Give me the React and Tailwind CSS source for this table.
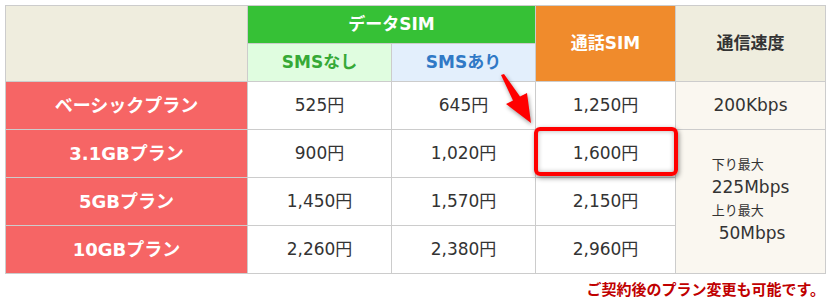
export default function App() {
  const rows = [
    { name: 'ベーシックプラン', a: '525円', b: '645円', c: '1,250円' },
    { name: '3.1GBプラン', a: '900円', b: '1,020円', c: '1,600円' },
    { name: '5GBプラン', a: '1,450円', b: '1,570円', c: '2,150円' },
    { name: '10GBプラン', a: '2,260円', b: '2,380円', c: '2,960円' },
  ];

  return (
    <div className="relative w-[830px] h-[300px] bg-white p-[5px] font-['DejaVu_Sans','Noto_Sans_CJK_JP',sans-serif] text-[#333]">
      <table className="w-[820px] table-fixed border-collapse text-center">
        <colgroup>
          <col className="w-[242px]" />
          <col className="w-[144px]" />
          <col className="w-[144px]" />
          <col className="w-[140px]" />
          <col className="w-[150px]" />
        </colgroup>
        <thead>
          <tr className="h-[38px]">
            <th rowSpan={2} className="border border-[#ccc] bg-[#efedde]"></th>
            <th colSpan={2} className="border border-[#ccc] bg-[#36c136] text-white text-[17px] font-bold">データSIM</th>
            <th rowSpan={2} className="border border-[#ccc] bg-[#f08b2c] text-white text-[17px] font-bold">通話SIM</th>
            <th rowSpan={2} className="border border-[#ccc] bg-[#efedde] text-[#333] text-[17px] font-bold">通信速度</th>
          </tr>
          <tr className="h-[38px]">
            <th className="border border-[#ccc] bg-[#e0fde0] text-[#36a936] text-[17px] font-bold">SMSなし</th>
            <th className="border border-[#ccc] bg-[#e3effc] text-[#3079c6] text-[17px] font-bold">SMSあり</th>
          </tr>
        </thead>
        <tbody>
          {rows.map((r, i) => (
            <tr key={r.name} className="h-[48px]">
              <td className="border border-[#ccc] bg-[#f66565] text-white text-[18px] font-bold">{r.name}</td>
              <td className="border border-[#ccc] text-[17px]">{r.a}</td>
              <td className="border border-[#ccc] text-[17px]">{r.b}</td>
              <td className="border border-[#ccc] text-[17px]">{r.c}</td>
              {i === 0 && (
                <td className="border border-[#ccc] bg-[#faf7f0] text-[17px]">200Kbps</td>
              )}
              {i === 1 && (
                <td rowSpan={3} className="border border-[#ccc] bg-[#faf7f0]">
                  <div className="inline-block text-left -mt-[4px]">
                    <div className="text-[13px] leading-[23px]">下り最大</div>
                    <div className="text-[17px] leading-[23px]">225Mbps</div>
                    <div className="text-[13px] leading-[23px]">上り最大</div>
                    <div className="text-[17px] leading-[23px] pl-[7px]">50Mbps</div>
                  </div>
                </td>
              )}
            </tr>
          ))}
        </tbody>
      </table>
      <p className="mt-[6px] text-right text-[15px] leading-[20px] font-bold text-[#c00000]">ご契約後のプラン変更も可能です。</p>

      <div className="absolute left-[534px] top-[127px] w-[144px] h-[49px] rounded-[6px] border-4 border-[#ff0000] shadow-[1px_2px_5px_rgba(0,0,0,0.45),inset_0_0_5px_rgba(0,0,0,0.3)]"></div>

      <svg
        className="absolute left-[490px] top-[65px] w-[50px] h-[65px] drop-shadow-[1px_2px_2px_rgba(0,0,0,0.4)]"
        viewBox="490 65 50 65"
      >
        <polygon points="501,75 504,74 520,96.5 527,93 531,123 506,104 513,100.5" fill="#ff0000" />
      </svg>
    </div>
  );
}
